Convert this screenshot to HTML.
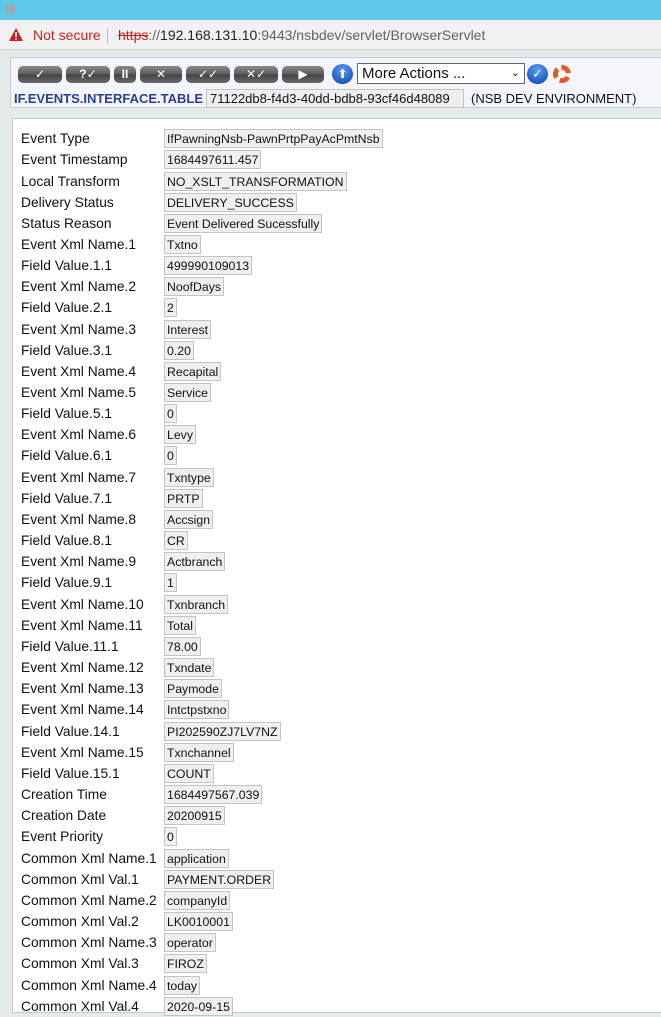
<!DOCTYPE html>
<html><head><meta charset="utf-8"><style>
*{margin:0;padding:0;box-sizing:border-box}
body{width:661px;height:1014px;overflow:hidden;background:#e4ebe8;font-family:"Liberation Sans","DejaVu Sans",sans-serif;position:relative}
.title{position:absolute;left:0;top:0;width:661px;height:20px;background:#5ec9ea}
.addr{position:absolute;left:0;top:20px;width:661px;height:30px;background:#f1f1f1;border-bottom:1px solid #cfcfcf;font-size:14px;color:#5f6368}
.hdr{position:absolute;left:10px;top:57px;width:660px;height:51px;background:#f3f5fb;border:1px solid #c8cbd0}
.btn{position:absolute;top:8px;height:17px;border-radius:5px;background:linear-gradient(#8a8a8a,#5a5a5a 50%,#444 51%,#6a6a6a);color:#fff;font-size:12px;text-align:center;line-height:17px;font-weight:bold}
.panel{position:absolute;left:12px;top:118px;width:660px;height:895px;background:#fff;border:1px solid #c8c8c8}
.r{position:absolute;left:21px;font-size:13.8px;color:#111;white-space:nowrap;height:19px;line-height:20px}
.v{position:absolute;left:164px;height:19px;line-height:18px;font-size:12.3px;background:#efefef;border:1px solid #c4c4c4;padding:0 2px;color:#111;white-space:nowrap}
</style></head><body>
<div class="title"><span style="position:absolute;left:5px;top:4px;width:10px;height:10px;background:#9ab;border-radius:2px"></span></div>
<div class="addr">
<svg style="position:absolute;left:9px;top:8px" width="14" height="13" viewBox="0 0 14 13"><path d="M7 0L14 13H0Z" fill="#c5221f"/><rect x="6.2" y="4" width="1.6" height="5" fill="#fff"/><rect x="6.2" y="10" width="1.6" height="1.6" fill="#fff"/></svg>
<span style="position:absolute;left:33px;top:7px;color:#c5221f">Not secure</span>
<span style="position:absolute;left:107px;top:8px;width:1px;height:16px;background:#bbb"></span>
<span style="position:absolute;left:118px;top:7px"><span style="color:#c5221f;text-decoration:line-through">https</span>://<span style="color:#222">192.168.131.10</span>:9443/nsbdev/servlet/BrowserServlet</span>
</div>
<div class="hdr">
<div class="btn" style="left:7px;width:44px">✓</div>
<div class="btn" style="left:55px;width:44px">?✓</div>
<div class="btn" style="left:103px;width:22px">II</div>
<div class="btn" style="left:129px;width:42px">✕</div>
<div class="btn" style="left:175px;width:44px">✓✓</div>
<div class="btn" style="left:223px;width:44px">✕✓</div>
<div class="btn" style="left:271px;width:42px">▶</div>
<div style="position:absolute;left:321px;top:6px;width:21px;height:20px;border-radius:50%;background:radial-gradient(circle at 50% 30%,#5a9ef0,#0b3fae);color:#fff;font-size:12px;text-align:center;line-height:20px">⬆</div>
<div style="position:absolute;left:346px;top:5px;width:168px;height:21px;background:#fff;border:1px solid #666;font-size:15px;line-height:19px;padding-left:4px;color:#111">More Actions ...<span style="position:absolute;right:4px;top:0;font-size:11px">⌄</span></div>
<div style="position:absolute;left:516px;top:6px;width:21px;height:20px;border-radius:50%;background:radial-gradient(circle at 50% 30%,#5a9ef0,#0b3fae);color:#fff;font-size:13px;text-align:center;line-height:20px">✓</div>
<div style="position:absolute;left:542px;top:7px;width:18px;height:18px;border-radius:50%;border:5px dashed #e25a2b;background:#fff"></div>
<div style="position:absolute;left:3px;top:33px;font-size:13px;font-weight:bold;color:#2c3f8a">IF.EVENTS.INTERFACE.TABLE</div>
<div style="position:absolute;left:195px;top:31px;width:258px;height:19px;background:#eee;border:1px solid #c4c4c4;font-size:13px;line-height:17px;padding-left:3px;color:#111">71122db8-f4d3-40dd-bdb8-93cf46d48089</div>
<div style="position:absolute;left:460px;top:33px;font-size:13px;color:#111">(NSB DEV ENVIRONMENT)</div>
</div>
<div class="panel"></div>
<div class="r" style="top:129px">Event Type</div><div class="v" style="top:129px">IfPawningNsb-PawnPrtpPayAcPmtNsb</div>
<div class="r" style="top:150px">Event Timestamp</div><div class="v" style="top:150px">1684497611.457</div>
<div class="r" style="top:172px">Local Transform</div><div class="v" style="top:172px">NO_XSLT_TRANSFORMATION</div>
<div class="r" style="top:193px">Delivery Status</div><div class="v" style="top:193px">DELIVERY_SUCCESS</div>
<div class="r" style="top:214px">Status Reason</div><div class="v" style="top:214px">Event Delivered Sucessfully</div>
<div class="r" style="top:235px">Event Xml Name.1</div><div class="v" style="top:235px">Txtno</div>
<div class="r" style="top:256px">Field Value.1.1</div><div class="v" style="top:256px">499990109013</div>
<div class="r" style="top:277px">Event Xml Name.2</div><div class="v" style="top:277px">NoofDays</div>
<div class="r" style="top:298px">Field Value.2.1</div><div class="v" style="top:298px">2</div>
<div class="r" style="top:320px">Event Xml Name.3</div><div class="v" style="top:320px">Interest</div>
<div class="r" style="top:341px">Field Value.3.1</div><div class="v" style="top:341px">0.20</div>
<div class="r" style="top:362px">Event Xml Name.4</div><div class="v" style="top:362px">Recapital</div>
<div class="r" style="top:383px">Event Xml Name.5</div><div class="v" style="top:383px">Service</div>
<div class="r" style="top:404px">Field Value.5.1</div><div class="v" style="top:404px">0</div>
<div class="r" style="top:425px">Event Xml Name.6</div><div class="v" style="top:425px">Levy</div>
<div class="r" style="top:446px">Field Value.6.1</div><div class="v" style="top:446px">0</div>
<div class="r" style="top:468px">Event Xml Name.7</div><div class="v" style="top:468px">Txntype</div>
<div class="r" style="top:489px">Field Value.7.1</div><div class="v" style="top:489px">PRTP</div>
<div class="r" style="top:510px">Event Xml Name.8</div><div class="v" style="top:510px">Accsign</div>
<div class="r" style="top:531px">Field Value.8.1</div><div class="v" style="top:531px">CR</div>
<div class="r" style="top:552px">Event Xml Name.9</div><div class="v" style="top:552px">Actbranch</div>
<div class="r" style="top:573px">Field Value.9.1</div><div class="v" style="top:573px">1</div>
<div class="r" style="top:595px">Event Xml Name.10</div><div class="v" style="top:595px">Txnbranch</div>
<div class="r" style="top:616px">Event Xml Name.11</div><div class="v" style="top:616px">Total</div>
<div class="r" style="top:637px">Field Value.11.1</div><div class="v" style="top:637px">78.00</div>
<div class="r" style="top:658px">Event Xml Name.12</div><div class="v" style="top:658px">Txndate</div>
<div class="r" style="top:679px">Event Xml Name.13</div><div class="v" style="top:679px">Paymode</div>
<div class="r" style="top:700px">Event Xml Name.14</div><div class="v" style="top:700px">Intctpstxno</div>
<div class="r" style="top:722px">Field Value.14.1</div><div class="v" style="top:722px">PI202590ZJ7LV7NZ</div>
<div class="r" style="top:743px">Event Xml Name.15</div><div class="v" style="top:743px">Txnchannel</div>
<div class="r" style="top:764px">Field Value.15.1</div><div class="v" style="top:764px">COUNT</div>
<div class="r" style="top:785px">Creation Time</div><div class="v" style="top:785px">1684497567.039</div>
<div class="r" style="top:806px">Creation Date</div><div class="v" style="top:806px">20200915</div>
<div class="r" style="top:827px">Event Priority</div><div class="v" style="top:827px">0</div>
<div class="r" style="top:849px">Common Xml Name.1</div><div class="v" style="top:849px">application</div>
<div class="r" style="top:870px">Common Xml Val.1</div><div class="v" style="top:870px">PAYMENT.ORDER</div>
<div class="r" style="top:891px">Common Xml Name.2</div><div class="v" style="top:891px">companyId</div>
<div class="r" style="top:912px">Common Xml Val.2</div><div class="v" style="top:912px">LK0010001</div>
<div class="r" style="top:933px">Common Xml Name.3</div><div class="v" style="top:933px">operator</div>
<div class="r" style="top:954px">Common Xml Val.3</div><div class="v" style="top:954px">FIROZ</div>
<div class="r" style="top:976px">Common Xml Name.4</div><div class="v" style="top:976px">today</div>
<div class="r" style="top:997px">Common Xml Val.4</div><div class="v" style="top:997px">2020-09-15</div>
</body></html>
